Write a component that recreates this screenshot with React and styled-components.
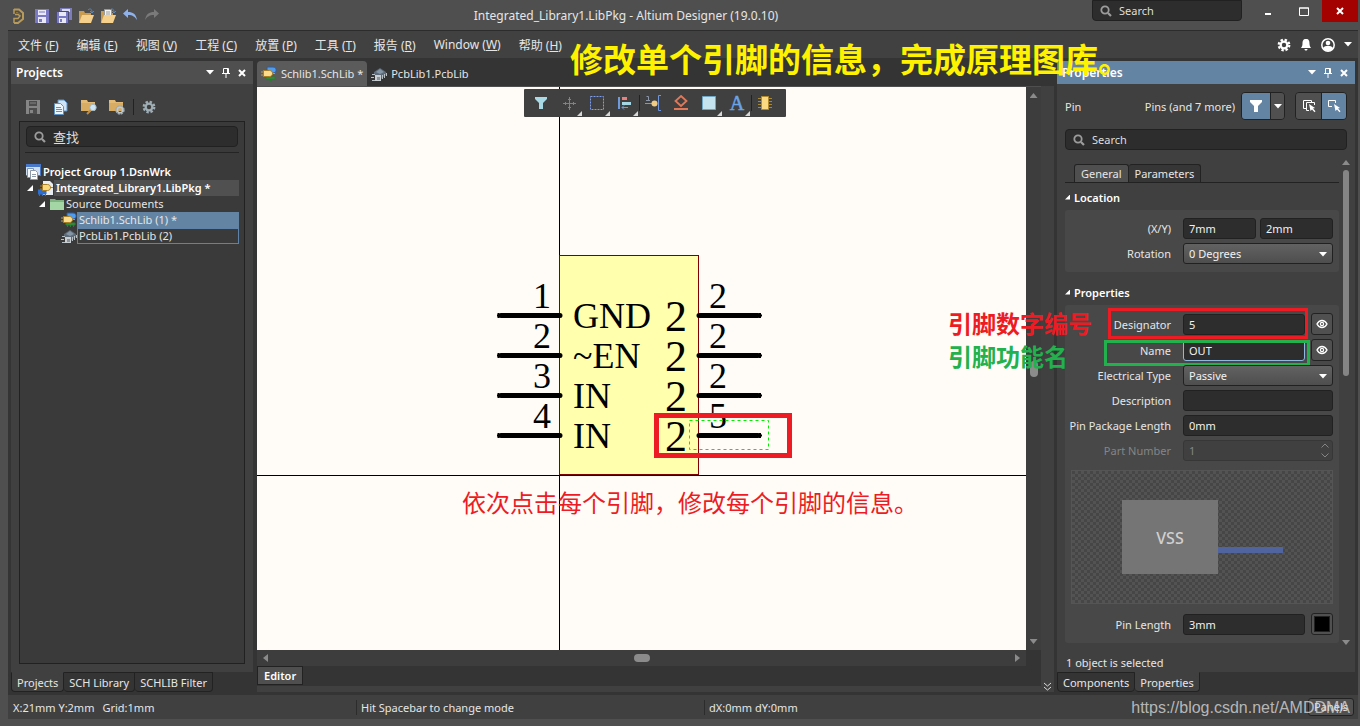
import { useState } from "react";
import styled, { createGlobalStyle } from "styled-components";

const GlobalStyle = createGlobalStyle`
  * {
    box-sizing: border-box;
  }

  body {
    margin: 0;
    background: #4f4f4f;
  }

  body,
  button,
  input,
  select {
    font-family: "Noto Sans", "Open Sans", "Noto Sans CJK SC", sans-serif;
    font-size: 11px;
    color: #e6e6e6;
  }

  button {
    cursor: pointer;
  }
`;

/* ---------- icons ---------- */

const Svg = ({ w = 16, h = w, children, ...rest }) => (
  <svg
    width={w}
    height={h}
    viewBox={`0 0 ${w} ${h}`}
    fill="none"
    aria-hidden="true"
    {...rest}
  >
    {children}
  </svg>
);

const LogoIcon = () => (
  <Svg>
    <path d="M2 1.500h5l4 3.500v6l-5 4H2" stroke="#b79a5b" strokeWidth="2" />
    <path d="M2 1v5M3 6.500h3l2 1.500-2 2.500H2V15" stroke="#b79a5b" strokeWidth="1.500" />
    <path d="M4 4.500h2l2 2" stroke="#8a713d" />
  </Svg>
);

const SaveIcon = ({ color = "#7a7ac4", paper = "#e9e9f7" }) => (
  <Svg>
    <path d="M1 1h14v14H1z" fill={color} />
    <path d="M4 2h8v5H4zM4 9h8v6H4z" fill={paper} />
    <path d="M5 4h6" stroke={color} />
    <path d="M5 11h3v3H5z" fill={color} />
  </Svg>
);

const SaveAllIcon = () => (
  <Svg>
    <path d="M4 0h12v12H4z" fill="#7d7dbc" />
    <path d="M6 1h8v3H6z" fill="#dcdcf0" />
    <path d="M.5 3.500h12v12H.5z" fill="#7a7ac4" stroke="#4b4b72" />
    <path d="M3 4h7v4H3zM3 10h7v5H3z" fill="#e9e9f7" />
    <path d="M4 11h2v3H4z" fill="#7a7ac4" />
  </Svg>
);

const OpenIcon = ({ docs }) => (
  <Svg>
    <path d="M1 3h5l1 2h6v9H1z" fill="#c99b4f" />
    {docs && (
      <path d="M4.500 1.500h7v9h-7zM6 4h4M6 6h4" fill="#f4f4f4" stroke="#9a9a9a" />
    )}
    <path d="M4 7h12l-3 8H1z" fill="#f5cf8c" />
    <path d="M10 2c2-2 4-1 4 2M12 3l2 2 2-2" stroke="#5d87b5" />
  </Svg>
);

const UndoIcon = ({ flip, color = "#8fb2ea" }) => (
  <Svg>
    <g transform={flip ? "matrix(-1 0 0 1 16 0)" : undefined}>
      <path d="M1 5.500 6 1v3c5 0 8 2 9 8-2-3-4-5-9-5v3z" fill={color} />
    </g>
  </Svg>
);

const MagnifierIcon = () => (
  <Svg w={12}>
    <circle cx="5" cy="5" r="3.700" stroke="#9c9c9c" strokeWidth="1.800" />
    <path d="m8 8 3 3" stroke="#9c9c9c" strokeWidth="2.200" />
  </Svg>
);

const CaretIcon = ({ color = "#fff" }) => (
  <Svg w={8} h={5}>
    <path d="M0 0h8L4 4.500z" fill={color} />
  </Svg>
);

const PinIcon = () => (
  <Svg w={8} h={10}>
    <path d="M1.500 .5h5v5h-5zM5.500 1v4M0 5.500h8M4 6v4" stroke="#fff" />
  </Svg>
);

const CrossIcon = () => (
  <Svg w={8}>
    <path d="m1 1 6 6M7 1 1 7" stroke="#fff" strokeWidth="2" />
  </Svg>
);

const GearIcon = ({ size = 14, color = "#fff", hole = "#414141" }) => (
  <Svg w={size} viewBox="0 0 14 14">
    <circle cx="7" cy="7" r="4.500" fill={color} />
    <circle
      cx="7"
      cy="7"
      r="5.300"
      stroke={color}
      strokeWidth="2.200"
      strokeDasharray="2.400 1.763"
    />
    <circle cx="7" cy="7" r="2.200" fill={hole} />
  </Svg>
);

const BellIcon = () => (
  <Svg w={12} h={14}>
    <path
      d="M6 1c3 0 3.500 2 3.500 5 0 2 1 3 1.500 4H1c.5-1 1.500-2 1.500-4C2.500 3 3 1 6 1zM4.500 11h3c0 2-3 2-3 0z"
      fill="#fff"
    />
  </Svg>
);

const UserIcon = () => (
  <Svg w={14}>
    <circle cx="7" cy="7" r="6.200" stroke="#fff" strokeWidth="1.500" />
    <circle cx="7" cy="5" r="2.300" fill="#fff" />
    <path d="M2 10c2-3 8-3 10 0-2 4-8 4-10 0z" fill="#fff" />
  </Svg>
);

const DocsIcon = () => (
  <Svg>
    <path d="M5 1h6l3 3v8H5z" fill="#cfe3f5" stroke="#5e91c4" />
    <path d="M1.500 4.500h6l3 3v8h-9z" fill="#eef6fd" stroke="#5e91c4" />
    <path d="M3 8.500h5M3 10.500h6M3 12.500h6" stroke="#5e91c4" />
  </Svg>
);

const FolderToolIcon = ({ gear }) => (
  <Svg>
    <path d="M0 1h6l1 2h7v9H0z" fill="#e3bb77" />
    <path d="M0 4h14v8H0z" fill="#d8ac63" />
    {gear ? (
      <g transform="translate(6 6)">
        <circle cx="5" cy="5" r="3.500" stroke="#9aa7ad" strokeWidth="2.500" strokeDasharray="2 .75" />
        <circle cx="5" cy="5" r="2.700" stroke="#c0cacf" strokeWidth="1.500" />
      </g>
    ) : (
      <>
        <path d="m6 15 4-4" stroke="#c98f3c" strokeWidth="2" />
        <circle cx="12" cy="8.500" r="3.200" fill="#cfe6f5" stroke="#9fb7c6" />
      </>
    )}
  </Svg>
);

const WorkspaceIcon = () => (
  <Svg>
    <path d="M1 0h15v12H1z" fill="#4a78c8" />
    <path d="M1 3h14v8H1z" fill="#cfdff3" />
    <path d="M2.500 4.500h6v9h-6z" fill="#f4f8fd" stroke="#7795bd" />
    <path d="M5.500 6.500h5l2 2v7h-7z" fill="#fff" stroke="#8d9aa8" />
    <path d="M7 10.500h4M7 12.500h4" stroke="#8d9aa8" />
  </Svg>
);

const LibraryIcon = () => (
  <Svg>
    <path d="M5 1h7l3 3v11H5z" fill="#e8edf2" />
    <path d="M0 10h8v4H0zM1.500 13v3M4.500 13v3M7.500 13v3" fill="#2d6fd0" stroke="#2d6fd0" />
    <path d="M4.500 4.500h5c4 0 4 6 0 6h-5z" fill="#f8d878" stroke="#a97f26" />
    <path d="M2 6h3M2 9h3M12 7.500h3" stroke="#a97f26" />
  </Svg>
);

const SchIcon = () => (
  <Svg>
    <path d="M6 1h6c4 0 4 5 1 6H6z" fill="#4f9bef" stroke="#2a5ea8" />
    <path d="M5 11h9v2H5zM6.500 13v2M9.500 13v2M12.500 13v2" fill="#2f9a3a" stroke="#2f7a32" />
    <path d="M2.500 4.500h6c4 0 4 6 0 6h-6z" fill="#fbdc8c" stroke="#a97f26" />
    <path d="M0 6h2M0 9h2M12 7.500h2" stroke="#c79a3c" />
  </Svg>
);

const PcbIcon = () => (
  <Svg>
    <path d="M3 6 9 2l6 4v3l-5 4-7-4z" fill="#5d6b78" />
    <path d="m5 6 4-3 4 3-4 2z" fill="#8596a6" />
    <path d="M11.500 9v4M13.500 8v4M15.500 7v3M1 8.500h3M0 11.500h3M1 14.500h3" stroke="#b8c0c6" />
    <path d="M4 9h6v6H4z" fill="#c9ced2" />
    <path d="M6 11h3v3H6z" fill="#8b9298" />
  </Svg>
);

const FolderIcon = () => (
  <Svg w={14} h={12}>
    <path d="M0 1h5l1 1h8v10H0z" fill="#7fb382" />
    <path d="M0 4h14v8H0z" fill="#a3d6a4" />
  </Svg>
);

const FunnelIcon = ({ color = "#a9d9e4" }) => (
  <Svg w={14}>
    <path d="M1 1h12v2L9 7v6H5V7L1 3z" fill={color} />
  </Svg>
);

const EyeIcon = () => (
  <Svg w={12} h={10}>
    <path d="M1 5c2.500-4.700 7.500-4.700 10 0-2.500 4.700-7.500 4.700-10 0z" stroke="#fff" strokeWidth="1.400" />
    <circle cx="6" cy="5" r="1.600" stroke="#fff" strokeWidth="1.200" />
  </Svg>
);

const PickIcon = ({ stacked }) => (
  <Svg w={14}>
    {stacked && <path d="M4 9.500H1.500v-8h8V3" stroke="#fff" />}
    <path
      d={stacked ? "M7 11.500H4.500v-8h8V6" : "M5 7.500H1.500v-6h7V4"}
      stroke="#fff"
    />
    <path d="m7 5 6 4-2 .6 2.500 2.600-1 1L10 10.500 8.500 12z" fill="#fff" />
  </Svg>
);

const MoveIcon = () => (
  <Svg w={13}>
    <path d="M6.500 0v13M0 6.500h13M5 2.500h3M5 10.500h3M2.500 5v3M10.500 5v3" stroke="#5d83dc" />
  </Svg>
);

const MarqueeIcon = () => (
  <Svg w={14}>
    <path d="M.5.5h13v13H.5z" stroke="#7d9df0" strokeDasharray="2 1" />
  </Svg>
);

const AlignIcon = () => (
  <Svg w={14}>
    <path d="M1 1v12" stroke="#6f9adb" strokeWidth="2" />
    <path d="M4 1h5v3H4z" fill="#e98080" />
    <path d="M4 6h9v3H4z" fill="#a4d6e6" />
    <path d="M4 11.500h6M6 9.500l-2 2 2 2" stroke="#6f9adb" />
  </Svg>
);

const PlacePinIcon = () => (
  <Svg>
    <path d="M16 .5h-2.500v15H16" stroke="#6f95dd" />
    <path d="M1.500 1.500h2V6M1 5.500h4" stroke="#8b96a8" />
    <path d="M0 8.500h7" stroke="#b89058" />
    <circle cx="9.500" cy="8.500" r="3" fill="#f0cb86" />
  </Svg>
);

const EraserIcon = () => (
  <Svg>
    <path d="m8 1 5.500 5L8 11 2.500 6z" stroke="#e0795a" strokeWidth="1.800" />
    <path d="M1 14h14" stroke="#e0795a" strokeWidth="2" />
  </Svg>
);

const SquareIcon = () => (
  <Svg w={14}>
    <path d="M.5.5h13v13H.5z" fill="#c5e3ee" stroke="#6fa6c4" />
  </Svg>
);

const TextIcon = () => (
  <Svg w={16} h={20}>
    <text
      x="8"
      y="17"
      textAnchor="middle"
      fontFamily="Liberation Serif, serif"
      fontSize="20"
      fill="#6ba4e6"
      stroke="#6ba4e6"
      strokeWidth=".5"
    >
      A
    </text>
  </Svg>
);

const ChipIcon = () => (
  <Svg>
    <path d="M1 3.500h14M1 6.500h14M1 9.500h14M1 12.500h14" stroke="#a48635" />
    <path d="M4.500 1.500h7v13h-7z" fill="#fbd983" stroke="#b08a2c" />
  </Svg>
);

/* ---------- window frame ---------- */

const Window = styled.div`
  position: relative;
  display: flex;
  flex-direction: column;
  min-height: 100vh;
  padding: 0 2px 7px 8px;
  background: #4f4f4f;
`;

const TitleBar = styled.header`
  display: grid;
  grid-template-columns: auto 1fr auto;
  height: 31px;
  padding-left: 4px;
  border-bottom: 1px solid #2c2c2c;
`;

const QuickAccess = styled.div`
  display: flex;
  align-items: center;
  gap: 6px;
`;

const QuickButton = styled.button`
  display: flex;
  padding: 0;
  border: 0;
  background: none;
`;

const AppTitle = styled.h1`
  margin: 0;
  font-size: 12px;
  font-weight: 400;
  line-height: 32px;
  text-align: center;
`;

const TitleRight = styled.div`
  display: flex;
  align-items: flex-start;
`;

const SearchField = styled.label`
  display: flex;
  align-items: center;
  gap: 7px;
  height: 21px;
  width: ${(p) => p.$width || "auto"};
  margin: ${(p) => p.$margin || 0};
  padding: 0 7px;
  border: 1px solid #212121;
  border-radius: ${(p) => (p.$flush ? "0 0 4px 4px" : "4px")};
  background: #2d2d2d;

  input {
    flex: 1;
    min-width: 0;
    padding: 0;
    border: 0;
    outline: 0;
    background: none;
    font-size: ${(p) => p.$font || 11}px;
  }

  input::placeholder {
    color: #dedede;
    opacity: 1;
  }
`;

const WindowButton = styled.button`
  display: flex;
  justify-content: center;
  align-items: center;
  width: 36px;
  height: 22px;
  padding: 0;
  border: 0;
  background: ${(p) => (p.$close ? "#a30000" : "none")};
`;

const MenuBar = styled.nav`
  display: flex;
  align-items: center;
  gap: 18px;
  height: 27px;
  padding: 0 6px 0 10px;
  background: #414141;
`;

const MenuItem = styled.button`
  padding: 0;
  border: 0;
  background: none;
  font-size: 12px;
  white-space: nowrap;
`;

const MenuStatus = styled.div`
  display: flex;
  align-items: center;
  gap: 9px;
  margin-left: auto;
`;

const Workspace = styled.main`
  display: flex;
  flex: 1;
  padding: 3px;
  background: #343434;
`;

/* ---------- docked panels ---------- */

const Panel = styled.aside`
  display: flex;
  flex-direction: column;
  flex: none;
  width: ${(p) => p.$width}px;
`;

const PanelHeader = styled.div`
  display: flex;
  align-items: center;
  gap: 8px;
  height: 23px;
  padding: 0 7px 0 5px;
  background: ${(p) => (p.$active ? "#6484a4" : "#4f4f4f")};

  h2 {
    flex: 1;
    margin: 0;
    font-size: 12px;
    font-weight: 600;
    line-height: 20px;
    color: #fff;
  }
`;

const PanelBody = styled.div`
  display: flex;
  flex-direction: column;
  flex: 1;
  padding: 8px;
  background: #404040;
`;

const PanelTabs = styled.div`
  display: flex;
  height: 20px;
`;

const PanelTab = styled.button`
  padding: 0 5px;
  border: 1px solid #222;
  border-top-color: ${(p) => (p.$active ? "#404040" : "#222")};
  border-left-width: ${(p) => (p.$joined ? 0 : 1)}px;
  border-radius: 0 0 4px 4px;
  background: ${(p) => (p.$active ? "#404040" : "#343434")};
  white-space: nowrap;
`;

const Tools = styled.div`
  display: flex;
  align-items: center;
  gap: 12px;
  height: 29px;
  padding-left: 6px;
`;

const ToolDivider = styled.span`
  width: 1px;
  height: 16px;
  margin: 0 -4px;
  background: #222;
`;

const TreeBox = styled.div`
  flex: 1;
  padding: 4px 5px;
  border: 1px solid #212121;
  background: #3a3a3a;
`;

const TreeRule = styled.hr`
  height: 1px;
  margin: 5px 0 11px;
  border: 0;
  background: #242424;
`;

const TreeRow = styled.div`
  display: flex;
  align-items: center;
  height: 16px;
  padding-left: ${(p) => p.$indent}px;
`;

const TreeArrow = styled.span`
  width: 6px;
  height: 6px;
  margin-right: 5px;
  background: #fff;
  clip-path: polygon(100% 0, 100% 100%, 0 100%);
`;

const TreeLabel = styled.span`
  flex: 1;
  height: 16px;
  padding-left: 2px;
  line-height: 16px;
  font-weight: ${(p) => (p.$bold ? 600 : 400)};
  color: ${(p) => (p.$bold ? "#fff" : "#e6e6e6")};
  background: ${(p) => p.$fill || "none"};
  box-shadow: ${(p) => (p.$outline ? "inset 0 0 0 1px #5f83a8" : "none")};
`;

/* ---------- document area ---------- */

const DocumentArea = styled.section`
  display: flex;
  flex-direction: column;
  flex: 1;
  min-width: 0;
  margin-left: 4px;
`;

const DocTabs = styled.div`
  display: flex;
  height: 25px;
`;

const DocTab = styled.button`
  display: flex;
  align-items: center;
  gap: 4px;
  padding: 0 4px;
  border: 0;
  border-radius: 4px 4px 0 0;
  background: ${(p) => (p.$active ? "#5b5b5b" : "none")};
  white-space: nowrap;
`;

const EditorGrid = styled.div`
  display: grid;
  flex: 1;
  grid-template-columns: 1fr 15px;
  grid-template-rows: 1fr 16px;
  border-top: 1px solid #4f4f4f;
`;

const Sheet = styled.div`
  position: relative;
  overflow: hidden;
  background: #fffcf8;
`;

const Schematic = styled.svg`
  display: block;
  width: 100%;
  height: 100%;
`;

const Track = styled.div`
  display: flex;
  flex-direction: ${(p) => (p.$vertical ? "column" : "row")};
  justify-content: space-between;
  align-items: center;
  padding: ${(p) => (p.$vertical ? "6px 0" : "0 6px")};
  background: #3d3d3d;
`;

const TrackArrow = styled.span`
  width: ${(p) => (p.$side ? 5 : 8)}px;
  height: ${(p) => (p.$side ? 8 : 5)}px;
  background: #8b8b8b;
  clip-path: ${(p) => p.$shape};
`;

const TrackThumb = styled.span`
  width: ${(p) => (p.$vertical ? 8 : 16)}px;
  height: ${(p) => (p.$vertical ? 16 : 8)}px;
  border-radius: 4px;
  background: #8b8b8b;
`;

const EditorFooter = styled.div`
  height: 26px;
  border-bottom: 6px solid #404040;
`;

const EditorTab = styled.button`
  height: 19px;
  padding: 0 6px;
  border: 1px solid #222;
  background: #4f4f4f;
  font-weight: 600;
  line-height: 16px;
  color: #fff;
`;

const SideStrip = styled.div`
  display: flex;
  align-items: flex-end;
  justify-content: center;
  flex: none;
  width: 13px;
  margin: 25px 3px 0 0;
  background: #404040;
`;

const FloatingBar = styled.div`
  position: absolute;
  top: 2px;
  left: 267px;
  display: flex;
  height: 28px;
  padding: 0 7px 0 3px;
  border-radius: 1px;
  background: #404040;
`;

const FloatingButton = styled.button`
  position: relative;
  display: flex;
  justify-content: center;
  align-items: center;
  width: 28px;
  padding: 0;
  border: 0;
  background: none;

  &::before {
    content: "";
    display: ${(p) => (p.$divided ? "block" : "none")};
    position: absolute;
    left: 0;
    top: 6px;
    width: 1px;
    height: 16px;
    background: #222;
  }

  &::after {
    content: "";
    display: ${(p) => (p.$more ? "block" : "none")};
    position: absolute;
    right: 1px;
    bottom: 1px;
    width: 5px;
    height: 5px;
    background: #d8d8d8;
    clip-path: polygon(100% 0, 100% 100%, 0 100%);
  }
`;

/* ---------- properties panel ---------- */

const FilterRow = styled.div`
  display: flex;
  align-items: center;
  height: 28px;
  margin-bottom: 9px;
`;

const FilterScope = styled.span`
  margin: 0 6px 0 auto;
`;

const ButtonPair = styled.div`
  display: flex;
  height: 28px;
  margin-left: ${(p) => p.$gap || 0}px;
  border: 1px solid #222;
  border-radius: 4px;
  overflow: hidden;
`;

const PairButton = styled.button`
  display: flex;
  justify-content: center;
  align-items: center;
  width: ${(p) => p.$width}px;
  padding: 0;
  border: 0;
  background: ${(p) => (p.$on ? "#6484a4" : "#505050")};

  & + & {
    border-left: 1px solid #222;
  }
`;

const ScrollRow = styled.div`
  display: flex;
  flex: 1;
  margin-top: 10px;
`;

const FormColumn = styled.div`
  flex: 1;
  min-width: 0;
`;

const FormTabs = styled.div`
  display: flex;
  height: 23px;
  padding: 4px 0 0 9px;
  border-bottom: 1px solid #222;
`;

const FormTab = styled.button`
  padding: 0 6px;
  border: 1px solid #222;
  border-bottom: 0;
  border-left-width: ${(p) => (p.$active ? 1 : 0)}px;
  border-radius: 3px 3px 0 0;
  background: ${(p) => (p.$active ? "#4f4f4f" : "#363636")};
`;

const ScrollBar = styled.div`
  display: flex;
  flex-direction: column;
  align-items: center;
  width: 8px;
  margin: 0 -3px 0 3px;
`;

const ScrollThumb = styled.span`
  width: 6px;
  height: 206px;
  margin: 5px 0 auto;
  border-radius: 3px;
  background: #858585;
`;

const SectionTitle = styled.h3`
  display: flex;
  align-items: center;
  gap: 4px;
  height: 27px;
  margin: ${(p) => (p.$spaced ? "6px" : "0")} 0 0;
  padding-top: 1px;
  font-size: 11px;
  font-weight: 600;
  color: #fff;

  &::before {
    content: "";
    width: 5px;
    height: 5px;
    background: #fff;
    clip-path: polygon(100% 0, 100% 100%, 0 100%);
  }
`;

const Section = styled.div`
  display: flex;
  flex-direction: column;
  gap: 4px;
  padding: 8px 6px 8px 0;
  border-radius: 3px;
  background: #484848;
`;

const Field = styled.div`
  position: relative;
  display: grid;
  grid-template-columns: 106px 1fr;
  column-gap: 12px;
  align-items: center;
  color: ${(p) => (p.$off ? "#858585" : "#e6e6e6")};

  > label {
    text-align: right;
    white-space: nowrap;
  }
`;

const Controls = styled.div`
  display: flex;
  align-items: flex-end;
  gap: ${(p) => p.$gap || 6}px;
`;

const TextBox = styled.input`
  flex: 1;
  min-width: 0;
  width: 100%;
  height: 21px;
  padding: 0 5px;
  border: 1px solid ${(p) => (p.$focused ? "#8fb8e0" : "#212121")};
  border-radius: 3px;
  outline: 0;
  background: #2d2d2d;
  color: #f2f2f2;

  &:disabled {
    border-color: #373737;
    background: #404040;
    color: #858585;
  }
`;

const SelectWrap = styled.div`
  position: relative;
  flex: 1;

  svg {
    position: absolute;
    right: 6px;
    top: 9px;
    pointer-events: none;
  }
`;

const SelectBox = styled.select`
  display: block;
  width: 100%;
  height: 21px;
  padding: 0 5px;
  border: 1px solid #212121;
  border-radius: 3px;
  appearance: none;
  background: linear-gradient(#626262, #4e4e4e);
  color: #f2f2f2;
`;

const SquareButton = styled.button`
  display: flex;
  justify-content: center;
  align-items: center;
  width: 22px;
  height: 22px;
  padding: 0;
  border: 1px solid #222;
  border-radius: 3px;
  background: #505050;
`;

const Swatch = styled.span`
  width: 16px;
  height: 16px;
  border: 1px solid #222;
  background: #000;
`;

const Spinner = styled.svg`
  position: absolute;
  right: 4px;
  top: 3px;
`;

const Preview = styled.div`
  display: flex;
  align-items: center;
  height: 134px;
  margin: 5px 0 5px 6px;
  padding-left: 50px;
  border: 1px solid #555;
  background: repeating-conic-gradient(#535353 0 25%, #464646 0 50%) 0 0 / 6px 6px;
`;

const PreviewChip = styled.span`
  width: 96px;
  height: 74px;
  background: #757575;
  font-size: 16px;
  font-weight: 500;
  line-height: 76px;
  text-align: center;
  color: #d0d0d0;
`;

const PreviewPin = styled.span`
  width: 65px;
  height: 6px;
  margin-top: 26px;
  background: #5064a0;
`;

const Selected = styled.p`
  margin: 10px 0 -7px 1px;
  line-height: 16px;
`;

/* ---------- notes drawn over the window ---------- */

const Headline = styled.p`
  position: absolute;
  top: 34px;
  left: 570px;
  margin: 0;
  font-family: "Noto Sans CJK SC", sans-serif;
  font-size: 33px;
  font-weight: 700;
  line-height: 48px;
  white-space: nowrap;
  color: #fff200;
  pointer-events: none;
`;

const Highlight = styled.span`
  position: absolute;
  top: ${(p) => p.$top}px;
  left: ${(p) => p.$left}px;
  right: ${(p) => p.$right}px;
  height: ${(p) => p.$height}px;
  border: 3px solid ${(p) => p.$color};
  pointer-events: none;
`;

const FieldNote = styled.span`
  position: absolute;
  top: ${(p) => p.$top}px;
  left: -117px;
  font-family: "Noto Sans CJK SC", sans-serif;
  font-size: 24px;
  font-weight: 700;
  line-height: 24px;
  white-space: nowrap;
  color: ${(p) => p.$color};
`;

const Watermark = styled.span`
  position: absolute;
  right: 10px;
  bottom: 6px;
  font-family: "Liberation Sans", sans-serif;
  font-size: 16px;
  line-height: 24px;
  color: rgba(215, 215, 215, 0.8);
  pointer-events: none;
`;

/* ---------- status bar ---------- */

const StatusBar = styled.footer`
  display: grid;
  grid-template-columns: 348px 348px 1fr auto;
  align-items: center;
  height: 24px;
  padding-right: 4px;
  background: #404040;
`;

const StatusCell = styled.span`
  display: flex;
  gap: 8px;
  padding-left: 5px;

  & + & {
    padding-left: 4px;
    border-left: 1px solid #2c2c2c;
  }
`;

const PanelsButton = styled.button`
  height: 18px;
  padding: 0 5px;
  border: 1px solid #222;
  border-radius: 3px;
  background: #505050;
  line-height: 16px;
`;

const menus = [
  ["文件", "F"],
  ["编辑", "E"],
  ["视图", "V"],
  ["工程", "C"],
  ["放置", "P"],
  ["工具", "T"],
  ["报告", "R"],
  ["Window", "W"],
  ["帮助", "H"],
];

const canvasTools = [
  { name: "Filter", icon: <FunnelIcon /> },
  { name: "Move", icon: <MoveIcon />, more: true },
  { name: "Select", icon: <MarqueeIcon />, more: true },
  { name: "Align", icon: <AlignIcon />, more: true },
  { name: "Place pin", icon: <PlacePinIcon />, divided: true },
  { name: "IEEE symbol", icon: <EraserIcon /> },
  { name: "Rectangle", icon: <SquareIcon />, more: true },
  { name: "Text", icon: <TextIcon />, more: true },
  { name: "Part", icon: <ChipIcon />, divided: true },
];

const pins = [
  { left: "1", name: "GND", right: "2" },
  { left: "2", name: "~EN", right: "2" },
  { left: "3", name: "IN", right: "2" },
  { left: "4", name: "IN", right: "5" },
];

const HeaderButtons = () => (
  <>
    <QuickButton aria-label="Panel menu">
      <CaretIcon />
    </QuickButton>
    <QuickButton aria-label="Pin panel">
      <PinIcon />
    </QuickButton>
    <QuickButton aria-label="Close panel">
      <CrossIcon />
    </QuickButton>
  </>
);

const PinDrawing = () => (
  <Schematic>
    <path d="M302.500 0v2000M0 388.500h4000" stroke="#000" />
    <rect x="302.500" y="168.500" width="139" height="219" fill="#ffffae" stroke="#800000" />
    <g fontFamily="Liberation Serif, serif" fontSize="36" fill="#000">
      {pins.map((pin, i) => {
        const y = 228 + i * 40;
        return (
          <g key={i}>
            <path
              d={`M244 ${y + 0.5}H303M442 ${y + 0.5}H501`}
              stroke="#000"
              strokeWidth="5"
              strokeLinecap="round"
            />
            <path
              d={`M240 ${y + 0.5}h4M241.500 ${y - 2}v5M501 ${y + 0.5}h4M503 ${y - 2}v5`}
              stroke="#000"
              strokeWidth="2"
            />
            <text x="294" y={y - 7} textAnchor="end">
              {pin.left}
            </text>
            <text x="316" y={y + 13}>
              {pin.name}
            </text>
            <text x="408" y={y + 16} fontSize="44">
              2
            </text>
            <text x="452" y={y - 7}>
              {pin.right}
            </text>
          </g>
        );
      })}
    </g>
    <rect x="432.500" y="333.500" width="79" height="29" stroke="#00f000" strokeDasharray="3 3" fill="none" />
    <rect x="399.500" y="328.500" width="133" height="40" stroke="#ed1c24" strokeWidth="5" fill="none" />
    <text
      x="205"
      y="425"
      fontFamily="Noto Sans CJK SC, sans-serif"
      fontSize="24"
      fill="#ed1c24"
    >
      依次点击每个引脚，修改每个引脚的信息。
    </text>
  </Schematic>
);

const ProjectsPanel = () => (
  <Panel $width={242}>
    <PanelHeader>
      <h2>Projects</h2>
      <HeaderButtons />
    </PanelHeader>
    <PanelBody>
      <Tools>
        <QuickButton aria-label="Save">
          <SaveIcon color="#858585" paper="#4d4d4d" />
        </QuickButton>
        <QuickButton aria-label="Documents">
          <DocsIcon />
        </QuickButton>
        <QuickButton aria-label="Explore">
          <FolderToolIcon />
        </QuickButton>
        <QuickButton aria-label="Project options">
          <FolderToolIcon gear />
        </QuickButton>
        <ToolDivider />
        <QuickButton aria-label="Settings">
          <GearIcon size={14} color="#9fadb5" hole="#404040" />
        </QuickButton>
      </Tools>
      <TreeBox>
        <SearchField $font={13} $margin="0 1px">
          <MagnifierIcon />
          <input placeholder="查找" aria-label="查找" />
        </SearchField>
        <TreeRule />
        <TreeRow $indent={0}>
          <WorkspaceIcon />
          <TreeLabel $bold>Project Group 1.DsnWrk</TreeLabel>
        </TreeRow>
        <TreeRow $indent={2}>
          <TreeArrow />
          <LibraryIcon />
          <TreeLabel $bold $fill="#505050">
            Integrated_Library1.LibPkg *
          </TreeLabel>
        </TreeRow>
        <TreeRow $indent={14}>
          <TreeArrow />
          <FolderIcon />
          <TreeLabel>Source Documents</TreeLabel>
        </TreeRow>
        <TreeRow $indent={36}>
          <SchIcon />
          <TreeLabel $fill="#6484a4">Schlib1.SchLib (1) *</TreeLabel>
        </TreeRow>
        <TreeRow $indent={36}>
          <PcbIcon />
          <TreeLabel $outline>PcbLib1.PcbLib (2)</TreeLabel>
        </TreeRow>
      </TreeBox>
    </PanelBody>
    <PanelTabs>
      <PanelTab $active>Projects</PanelTab>
      <PanelTab $joined>SCH Library</PanelTab>
      <PanelTab $joined>SCHLIB Filter</PanelTab>
    </PanelTabs>
  </Panel>
);

const EditorArea = () => (
  <DocumentArea>
    <DocTabs>
      <DocTab $active>
        <SchIcon />
        Schlib1.SchLib *
      </DocTab>
      <DocTab>
        <PcbIcon />
        PcbLib1.PcbLib
      </DocTab>
    </DocTabs>
    <EditorGrid>
      <Sheet>
        <PinDrawing />
        <FloatingBar>
          {canvasTools.map((tool) => (
            <FloatingButton
              key={tool.name}
              aria-label={tool.name}
              $more={tool.more}
              $divided={tool.divided}
            >
              {tool.icon}
            </FloatingButton>
          ))}
        </FloatingBar>
      </Sheet>
      <Track $vertical>
        <TrackArrow $shape="polygon(0 100%, 50% 0, 100% 100%)" />
        <TrackThumb $vertical />
        <TrackArrow $shape="polygon(0 0, 100% 0, 50% 100%)" />
      </Track>
      <Track>
        <TrackArrow $side $shape="polygon(100% 0, 100% 100%, 0 50%)" />
        <TrackThumb />
        <TrackArrow $side $shape="polygon(0 0, 100% 50%, 0 100%)" />
      </Track>
    </EditorGrid>
    <EditorFooter>
      <EditorTab>Editor</EditorTab>
    </EditorFooter>
  </DocumentArea>
);

const PropertiesPanel = () => {
  const [pin, setPin] = useState({ designator: "5", name: "OUT" });
  const update = (key) => (e) => setPin({ ...pin, [key]: e.target.value });

  return (
    <Panel $width={298}>
      <PanelHeader $active>
        <h2>Properties</h2>
        <HeaderButtons />
      </PanelHeader>
      <PanelBody>
        <FilterRow>
          <span>Pin</span>
          <FilterScope>Pins (and 7 more)</FilterScope>
          <ButtonPair>
            <PairButton $on $width={28} aria-label="Filter">
              <FunnelIcon color="#fff" />
            </PairButton>
            <PairButton $width={14} aria-label="Filter options">
              <CaretIcon />
            </PairButton>
          </ButtonPair>
          <ButtonPair $gap={10}>
            <PairButton $width={25} aria-label="Select stacked">
              <PickIcon stacked />
            </PairButton>
            <PairButton $on $width={25} aria-label="Select single">
              <PickIcon />
            </PairButton>
          </ButtonPair>
        </FilterRow>
        <SearchField>
          <MagnifierIcon />
          <input placeholder="Search" aria-label="Search properties" />
        </SearchField>
        <ScrollRow>
          <FormColumn>
            <FormTabs>
              <FormTab $active>General</FormTab>
              <FormTab>Parameters</FormTab>
            </FormTabs>
            <SectionTitle>Location</SectionTitle>
            <Section>
              <Field>
                <label htmlFor="pos-x">(X/Y)</label>
                <Controls $gap={4}>
                  <TextBox id="pos-x" defaultValue="7mm" />
                  <TextBox aria-label="Y" defaultValue="2mm" />
                </Controls>
              </Field>
              <Field>
                <label htmlFor="rotation">Rotation</label>
                <SelectWrap>
                  <SelectBox id="rotation">
                    <option>0 Degrees</option>
                    <option>90 Degrees</option>
                    <option>180 Degrees</option>
                    <option>270 Degrees</option>
                  </SelectBox>
                  <CaretIcon />
                </SelectWrap>
              </Field>
            </Section>
            <SectionTitle $spaced>Properties</SectionTitle>
            <Section>
              <Field>
                <label htmlFor="designator">Designator</label>
                <Controls>
                  <TextBox
                    id="designator"
                    value={pin.designator}
                    onChange={update("designator")}
                  />
                  <SquareButton aria-label="Show designator">
                    <EyeIcon />
                  </SquareButton>
                </Controls>
                <Highlight $color="#ed1c24" $top={-5} $left={43} $right={25} $height={31} />
                <FieldNote $color="#ed1c24" $top={-2}>引脚数字编号</FieldNote>
              </Field>
              <Field>
                <label htmlFor="pin-name">Name</label>
                <Controls>
                  <TextBox
                    id="pin-name"
                    $focused
                    value={pin.name}
                    onChange={update("name")}
                  />
                  <SquareButton aria-label="Show name">
                    <EyeIcon />
                  </SquareButton>
                </Controls>
                <Highlight $color="#22b14c" $top={1} $left={39} $right={23} $height={26} />
                <FieldNote $color="#22b14c" $top={5}>引脚功能名</FieldNote>
              </Field>
              <Field>
                <label htmlFor="electrical">Electrical Type</label>
                <SelectWrap>
                  <SelectBox id="electrical">
                    <option>Passive</option>
                    <option>Input</option>
                    <option>Output</option>
                    <option>Power</option>
                  </SelectBox>
                  <CaretIcon />
                </SelectWrap>
              </Field>
              <Field>
                <label htmlFor="description">Description</label>
                <TextBox id="description" />
              </Field>
              <Field>
                <label htmlFor="package-length">Pin Package Length</label>
                <TextBox id="package-length" defaultValue="0mm" />
              </Field>
              <Field $off>
                <label htmlFor="part-number">Part Number</label>
                <TextBox id="part-number" defaultValue="1" disabled />
                <Spinner width="8" height="15" fill="none">
                  <path d="m.5 4.500 3.500-3.500 3.500 3.500M.5 10.500 4 14l3.500-3.500" stroke="#858585" />
                </Spinner>
              </Field>
              <Preview>
                <PreviewChip>VSS</PreviewChip>
                <PreviewPin />
              </Preview>
              <Field>
                <label htmlFor="pin-length">Pin Length</label>
                <Controls>
                  <TextBox id="pin-length" defaultValue="3mm" />
                  <SquareButton aria-label="Pin color">
                    <Swatch />
                  </SquareButton>
                </Controls>
              </Field>
            </Section>
          </FormColumn>
          <ScrollBar>
            <TrackArrow $shape="polygon(0 100%, 50% 0, 100% 100%)" />
            <ScrollThumb />
            <TrackArrow $shape="polygon(0 0, 100% 0, 50% 100%)" />
          </ScrollBar>
        </ScrollRow>
        <Selected>1 object is selected</Selected>
      </PanelBody>
      <PanelTabs>
        <PanelTab>Components</PanelTab>
        <PanelTab $active $joined>
          Properties
        </PanelTab>
      </PanelTabs>
    </Panel>
  );
};

const App = () => {
  return (
    <>
      <GlobalStyle />
      <Window lang="zh-CN">
        <TitleBar>
          <QuickAccess>
            <LogoIcon />
            <QuickButton aria-label="Save">
              <SaveIcon />
            </QuickButton>
            <QuickButton aria-label="Save all">
              <SaveAllIcon />
            </QuickButton>
            <QuickButton aria-label="Open">
              <OpenIcon />
            </QuickButton>
            <QuickButton aria-label="Open project">
              <OpenIcon docs />
            </QuickButton>
            <QuickButton aria-label="Undo">
              <UndoIcon />
            </QuickButton>
            <QuickButton aria-label="Redo">
              <UndoIcon flip color="#7a7a7a" />
            </QuickButton>
          </QuickAccess>
          <AppTitle>Integrated_Library1.LibPkg - Altium Designer (19.0.10)</AppTitle>
          <TitleRight>
            <SearchField $flush $width="150px" $margin="0 8px 0 0">
              <MagnifierIcon />
              <input placeholder="Search" aria-label="Search" />
            </SearchField>
            <WindowButton aria-label="Minimize">
              <Svg w={10}>
                <path d="M2 8h6" stroke="#fff" strokeWidth="2" />
              </Svg>
            </WindowButton>
            <WindowButton aria-label="Maximize">
              <Svg w={10} h={9}>
                <path d="M.5 1h9v7.500h-9zM0 1h10" stroke="#fff" />
              </Svg>
            </WindowButton>
            <WindowButton $close aria-label="Close">
              <CrossIcon />
            </WindowButton>
          </TitleRight>
        </TitleBar>
        <MenuBar>
          {menus.map(([text, key]) => (
            <MenuItem key={key}>
              {text} (<u>{key}</u>)
            </MenuItem>
          ))}
          <MenuStatus>
            <GearIcon />
            <BellIcon />
            <UserIcon />
            <CaretIcon />
          </MenuStatus>
        </MenuBar>
        <Workspace>
          <ProjectsPanel />
          <EditorArea />
          <SideStrip>
            <Svg w={9} h={10}>
              <path d="m1 1 3.500 3L8 1M1 5l3.500 3L8 5" stroke="#ddd" />
            </Svg>
          </SideStrip>
          <PropertiesPanel />
        </Workspace>
        <StatusBar>
          <StatusCell>
            <span>X:21mm Y:2mm</span>
            <span>Grid:1mm</span>
          </StatusCell>
          <StatusCell>Hit Spacebar to change mode</StatusCell>
          <StatusCell>dX:0mm dY:0mm</StatusCell>
          <PanelsButton>Panels</PanelsButton>
        </StatusBar>
        <Headline>修改单个引脚的信息，完成原理图库。</Headline>
        <Watermark>https://blog.csdn.net/AMDDMA</Watermark>
      </Window>
    </>
  );
};

export default App;
